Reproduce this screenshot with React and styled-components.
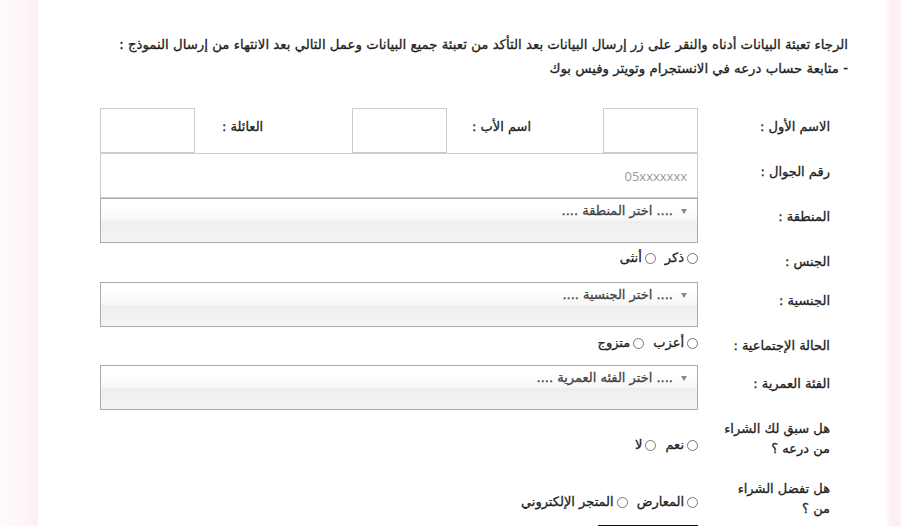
import React from "react";
import styled, { createGlobalStyle } from "styled-components";

const GlobalStyle = createGlobalStyle`
  html, body {
    margin: 0;
    padding: 0;
    background: #fff;
  }
  body {
    font-family: "DejaVu Sans", "Liberation Sans", sans-serif;
    color: #222;
  }
`;

const Page = styled.div`
  display: flex;
  min-height: 526px;
`;

const Gutter = styled.div`
  width: ${(p) => p.$w}px;
  flex-shrink: 0;
  background: ${(p) => p.$bg};
`;

const Main = styled.main`
  flex: 1;
  background: #fff;
  padding: 33px 39px 0 62px;
  direction: rtl;
  -webkit-text-stroke: 0.3px currentColor;
`;

const Intro = styled.p`
  margin: 0 0 27px;
  font-size: 13.3px;
  line-height: 24px;
  color: #1e1e1e;
`;

const Form = styled.form`
  width: 730px;
  margin-right: 18px;
  display: flex;
  flex-direction: column;
`;

const Row = styled.div`
  display: flex;
  height: ${(p) => p.$h}px;
`;

const Label = styled.label`
  width: 132px;
  flex-shrink: 0;
  box-sizing: border-box;
  padding-top: 9px;
  font-size: 13px;
  line-height: 20px;
  color: #222;
`;

const Field = styled.div`
  width: 598px;
  box-sizing: border-box;
  display: flex;
  align-items: flex-start;
  padding-top: ${(p) => p.$pt || 0}px;
`;

const TextInput = styled.input`
  box-sizing: border-box;
  width: ${(p) => (p.$w ? `${p.$w}px` : "100%")};
  height: 45px;
  margin: 0;
  padding: 0 10px;
  border: 1px solid #ccc;
  border-radius: 0;
  background: #fff;
  font-family: "Open Sans", sans-serif;
  font-size: 13px;
  color: #333;
  outline: none;
  -webkit-text-stroke: 0;

  &::placeholder {
    color: #999;
  }
`;

const InlineLabel = styled.span`
  width: ${(p) => p.$w}px;
  box-sizing: border-box;
  display: flex;
  justify-content: flex-end;
  padding: 9px 0 0 ${(p) => p.$pl}px;
  font-size: 13px;
  line-height: 20px;
`;

const Select = styled.div`
  box-sizing: border-box;
  width: 100%;
  height: 45px;
  padding: 0 10px 0 8px;
  border: 1px solid #aaa;
  background: linear-gradient(#fff 20%, #f6f6f6 50%, #eee 52%, #f4f4f4 100%);
  display: flex;
  align-items: flex-start;
  gap: 8px;
  font-size: 13px;
  line-height: 24px;
  color: #444;
`;

const Arrow = styled.span`
  width: 0;
  height: 0;
  margin-top: 10px;
  border-left: 3px solid transparent;
  border-right: 3px solid transparent;
  border-top: 5px solid #888;
`;

const RadioGroup = styled.div`
  display: flex;
  align-items: center;
  gap: 9px;
  font-size: 13px;
  line-height: 20px;
`;

const RadioOption = styled.label`
  display: flex;
  align-items: center;
  gap: 3px;
`;

const Radio = styled.input.attrs({ type: "radio" })`
  appearance: none;
  margin: 0;
  width: 11px;
  height: 11px;
  border-radius: 50%;
  border: 1px solid #777;
  background: #fff;
`;

const Submit = styled.div`
  width: 100px;
  margin-top: 3px;
  border-top: 2px solid #111;
`;

const SelectField = ({ text }) => (
  <Select>
    <Arrow />
    <span>{text}</span>
  </Select>
);

const Radios = ({ name, options }) => (
  <RadioGroup>
    {options.map((o) => (
      <RadioOption key={o}>
        <Radio name={name} />
        {o}
      </RadioOption>
    ))}
  </RadioGroup>
);

export default function App() {
  return (
    <>
      <GlobalStyle />
      <Page>
        <Gutter
          $w={38}
          $bg="linear-gradient(to right, #fffafb 0%, #fff6f8 55%, #ffeef3 100%)"
        />
        <Main>
          <Intro>
            الرجاء تعبئة البيانات أدناه والنقر على زر إرسال البيانات بعد التأكد من تعبئة جميع البيانات وعمل التالي بعد الانتهاء من إرسال النموذج :
            <br />- متابعة حساب درعه في الانستجرام وتويتر وفيس بوك
          </Intro>
          <Form>
            <Row $h={45}>
              <Label>الاسم الأول :</Label>
              <Field>
                <TextInput $w={95} />
                <InlineLabel $w={156} $pl={25}>اسم الأب :</InlineLabel>
                <TextInput $w={95} />
                <InlineLabel $w={157} $pl={27}>العائلة :</InlineLabel>
                <TextInput $w={95} />
              </Field>
            </Row>
            <Row $h={45}>
              <Label>رقم الجوال :</Label>
              <Field>
                <TextInput placeholder="05xxxxxxx" />
              </Field>
            </Row>
            <Row $h={45}>
              <Label>المنطقة :</Label>
              <Field>
                <SelectField text=".... اختر المنطقة ...." />
              </Field>
            </Row>
            <Row $h={39}>
              <Label>الجنس :</Label>
              <Field $pt={5}>
                <Radios name="gender" options={["ذكر", "أنثى"]} />
              </Field>
            </Row>
            <Row $h={45}>
              <Label>الجنسية :</Label>
              <Field>
                <SelectField text=".... اختر الجنسية ...." />
              </Field>
            </Row>
            <Row $h={38}>
              <Label>الحالة الإجتماعية :</Label>
              <Field $pt={6}>
                <Radios name="status" options={["أعزب", "متزوج"]} />
              </Field>
            </Row>
            <Row $h={45}>
              <Label>الفئة العمرية :</Label>
              <Field>
                <SelectField text=".... اختر الفئه العمرية ...." />
              </Field>
            </Row>
            <Row $h={60}>
              <Label>
                هل سبق لك الشراء
                <br />
                من درعه ؟
              </Label>
              <Field $pt={25}>
                <Radios name="before" options={["نعم", "لا"]} />
              </Field>
            </Row>
            <Row $h={52}>
              <Label>
                هل تفضل الشراء
                <br />
                من ؟
              </Label>
              <Field $pt={22}>
                <Radios name="prefer" options={["المعارض", "المتجر الإلكتروني"]} />
              </Field>
            </Row>
            <Row $h={10}>
              <Label />
              <Field>
                <Submit />
              </Field>
            </Row>
          </Form>
        </Main>
        <Gutter
          $w={14}
          $bg="linear-gradient(to right, #fff7f9 0%, #ffeff4 30%, #ffeff4 100%)"
        />
      </Page>
    </>
  );
}
